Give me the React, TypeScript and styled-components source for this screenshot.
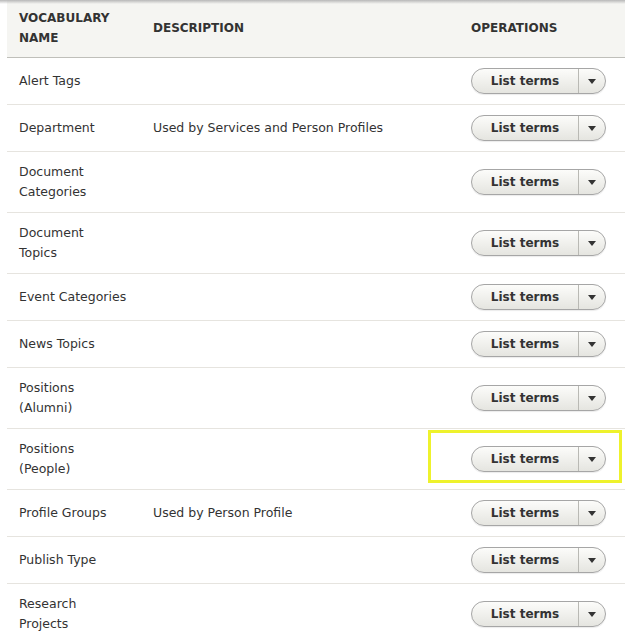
import React from 'react';
import styled, { createGlobalStyle } from 'styled-components';

const GlobalStyle = createGlobalStyle`
  html, body {
    margin: 0;
    padding: 0;
    background: #fff;
  }
  body {
    font-family: "DejaVu Sans", "Liberation Sans", sans-serif;
    color: #333;
  }
`;

const Page = styled.div`
  position: relative;
  padding-left: 7px;
  overflow: hidden;

  &::before {
    content: '';
    position: absolute;
    left: 0;
    right: 0;
    top: 0;
    height: 4px;
    background: linear-gradient(#b8b8b8, rgba(255, 255, 255, 0));
    pointer-events: none;
  }
`;

const Table = styled.table`
  width: 630px;
  border-collapse: collapse;
  font-size: 12.5px;
  line-height: 20px;
`;

const HeadCell = styled.th<{ $width?: number }>`
  width: ${(p) => (p.$width ? `${p.$width}px` : 'auto')};
  padding: 8px 12px 9px;
  background: #f5f5f2;
  border-bottom: 1px solid #bfbfba;
  text-align: left;
  font-weight: bold;
  text-transform: uppercase;
  font-size: 12px;
  line-height: 20px;
  vertical-align: middle;
  color: #333;
`;

const Row = styled.tr`
  border-bottom: 1px solid #e6e4df;
`;

const Cell = styled.td`
  padding: 10px 12px;
  vertical-align: middle;
  color: #333;
  white-space: pre-line;
`;

const SplitButton = styled.div`
  display: inline-flex;
  height: 26px;
  box-sizing: border-box;
  border: 1px solid #a6a6a6;
  border-radius: 13px;
  background: linear-gradient(#fcfcfa, #e5e5e0);
  box-shadow: 0 1px 1px rgba(0, 0, 0, 0.08);
  overflow: hidden;
  vertical-align: middle;
`;

const MainAction = styled.span`
  width: 106px;
  display: flex;
  align-items: center;
  justify-content: center;
  font-weight: bold;
  font-size: 12px;
  color: #333;
  border-right: 1px solid #b9b9b4;
`;

const Toggle = styled.span`
  width: 26px;
  display: flex;
  align-items: center;
  justify-content: center;
`;

const Highlight = styled.div`
  position: absolute;
  left: 428px;
  top: 430px;
  width: 188px;
  height: 47px;
  border: 3px solid #eef22c;
  pointer-events: none;
`;

const Caret = () => (
  <svg width="8" height="5" viewBox="0 0 8 5">
    <path d="M0 0 H8 L4 5 Z" fill="#333" />
  </svg>
);

const vocabularies: { name: string; description?: string }[] = [
  { name: 'Alert Tags' },
  { name: 'Department', description: 'Used by Services and Person Profiles' },
  { name: 'Document\nCategories' },
  { name: 'Document\nTopics' },
  { name: 'Event Categories' },
  { name: 'News Topics' },
  { name: 'Positions\n(Alumni)' },
  { name: 'Positions\n(People)' },
  { name: 'Profile Groups', description: 'Used by Person Profile' },
  { name: 'Publish Type' },
  { name: 'Research\nProjects' },
];

export default function App() {
  return (
    <Page>
      <GlobalStyle />
      <Table>
        <thead>
          <tr>
            <HeadCell $width={110}>Vocabulary name</HeadCell>
            <HeadCell $width={294}>Description</HeadCell>
            <HeadCell>Operations</HeadCell>
          </tr>
        </thead>
        <tbody>
          {vocabularies.map((v) => (
            <Row key={v.name}>
              <Cell>{v.name}</Cell>
              <Cell>{v.description}</Cell>
              <Cell>
                <SplitButton>
                  <MainAction>List terms</MainAction>
                  <Toggle>
                    <Caret />
                  </Toggle>
                </SplitButton>
              </Cell>
            </Row>
          ))}
        </tbody>
      </Table>
      <Highlight />
    </Page>
  );
}
